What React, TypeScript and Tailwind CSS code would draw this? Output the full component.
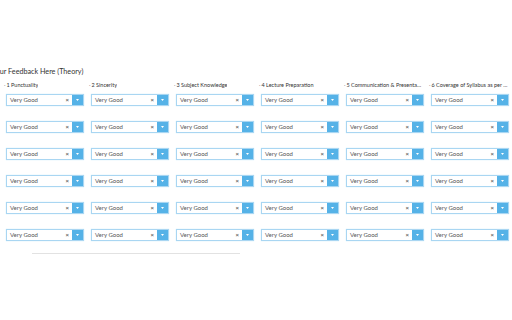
import React from 'react';

const criteria = [
  '1 Punctuality',
  '2 Sincerity',
  '3 Subject Knowledge',
  '4 Lecture Preparation',
  '5 Communication & Presentation Skills',
  '6 Coverage of Syllabus as per schedule',
];

const rows = [0, 1, 2, 3, 4, 5];

const RatingSelect: React.FC<{ value: string }> = ({ value }) => (
  <div className="flex h-[12px] w-[78px] border border-[#a9d6f2] bg-white shadow-[0_0_1px_#bfe3f7]">
    <div className="flex flex-1 items-center justify-between pl-[3px] pr-[3px] min-w-0">
      <span className="text-[6px] leading-none text-[#555]">{value}</span>
      <span className="text-[6px] leading-none font-bold text-[#666]">×</span>
    </div>
    <div className="flex w-[11px] items-center justify-center bg-[#55b2e7]">
      <svg width="3" height="2" viewBox="0 0 3 2">
        <path d="M0 0 L3 0 L1.5 2 Z" fill="#ffffff" />
      </svg>
    </div>
  </div>
);

export default function App() {
  return (
    <div className="h-[320px] w-[512px] overflow-hidden bg-white font-['Lato','Liberation_Sans',sans-serif]">
      <div className="pt-[67px]">
        <h2 className="-ml-[8px] h-[9px] text-[7.2px] leading-[9px] text-[#333] whitespace-nowrap">
          Your Feedback Here (Theory)
        </h2>
        <div className="mt-[5px] grid grid-cols-[repeat(6,85px)] pl-[4px]">
          {criteria.map((c) => (
            <div key={c} className="flex flex-col">
              <div className="flex h-[9px] w-[80px] items-center gap-[1px] text-[5.5px] leading-none text-[#333]">
                <span className="text-[#999]">·</span>
                <span className="truncate">{c}</span>
              </div>
              <div className="mt-[4px] flex flex-col gap-[15px] pl-[2px]">
                {rows.map((r) => (
                  <RatingSelect key={r} value="Very Good" />
                ))}
              </div>
            </div>
          ))}
        </div>
        <div className="ml-[32px] mt-[12px] h-px w-[208px] bg-[#e2e2e2]" />
      </div>
    </div>
  );
}
